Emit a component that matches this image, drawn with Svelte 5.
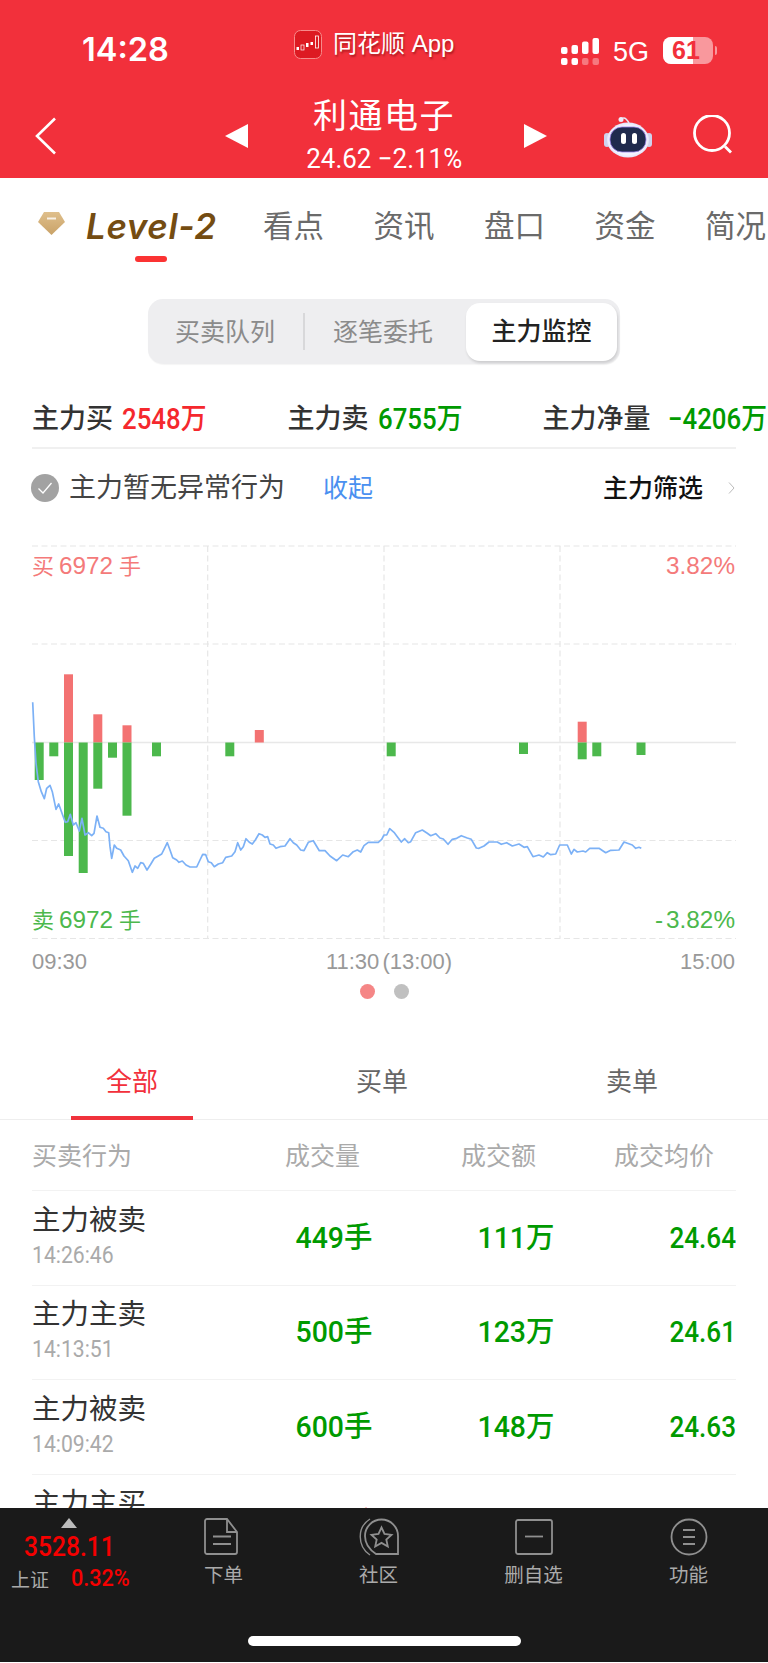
<script>
  const lineA = [[98,517],[103,620],[108,700],[115,755],[124,785],[133,806],[140,775],[150,766],[157,785],[168,838],[176,822],[186,850],[196,877],[203,875],[211,853],[220,885],[228,878],[238,903],[246,865],[255,915],[265,908],[275,917],[282,910],[291,858],[300,892],[310,895],[318,905],[326,908],[330,950],[335,985],[343,945],[350,955],[362,960],[372,978],[385,992],[397,1027],[405,1008],[413,1015],[422,998],[430,1000],[441,1020],[452,1003],[463,985],[475,978],[485,972],[492,958],[502,938],[510,960],[518,983],[530,990],[537,997],[547,993],[558,1005],[570,1011],[590,1011],[600,990],[608,973],[617,974],[625,995],[634,998],[643,1010],[655,1002],[668,998],[677,982],[695,978],[705,965],[713,938],[722,960],[730,950],[738,926],[748,937],[757,942],[766,930],[777,911],[787,915],[795,922],[803,920],[810,942],[820,945],[828,955],[840,950],[855,948],[870,926],[880,938],[890,945],[902,960],[912,962],[925,937],[940,932],[958,962],[975,962],[990,978],[1010,992],[1028,975],[1045,980],[1060,965],[1072,960],[1082,966],[1092,947],[1105,937],[1135,937],[1145,928]];
  const lineB = [[0,915],[8,915],[17,896],[30,907],[40,920],[52,936],[62,926],[73,938],[80,935],[95,908],[115,900],[130,910],[140,917],[155,911],[168,924],[178,927],[192,943],[205,928],[218,925],[232,917],[250,924],[262,928],[277,954],[285,955],[300,948],[315,936],[340,936],[352,943],[368,938],[385,948],[405,942],[420,952],[430,950],[447,980],[465,975],[478,981],[490,968],[500,974],[515,972],[527,945],[540,945],[550,945],[562,972],[570,958],[580,966],[597,963],[605,966],[617,955],[645,955],[665,968],[680,961],[705,960],[720,936],[745,945],[755,955],[765,952],[772,955]];
  const points = [...lineA.map(([x,y]) => [x/3, 530+y/3]), ...lineB.map(([x,y]) => [384+x/3, 530+y/3])]
    .map(([x,y]) => `${x.toFixed(1)},${y.toFixed(1)}`).join(' ');

  const mid = 742.500;
  const bars = [
    [34.7,null,780],[49.3,null,756.3],[64,674.3,856],[78.7,null,873],[93.3,714.3,788.7],[108,null,757.7],
    [122.5,725.3,815.7],[152,null,756.3],[225.3,null,756.3],[254.8,730,null],[386.7,null,756.3],[519,null,754],
    [577.7,721.7,759.3],[592.3,null,756.3],[636.5,null,755]
  ];

  const navTabs = ['看点','资讯','盘口','资金','简况'];
  const rows = [
    {name:'主力被卖',time:'14:26:46',vol:'449手',amt:'111万',avg:'24.64',up:false},
    {name:'主力主卖',time:'14:13:51',vol:'500手',amt:'123万',avg:'24.61',up:false},
    {name:'主力被卖',time:'14:09:42',vol:'600手',amt:'148万',avg:'24.63',up:false},
    {name:'主力主买',time:'14:05:18',vol:'449手',amt:'111万',avg:'24.64',up:true}
  ];
</script>

<div class="page">
  <header class="head">
    <div class="status">
      <span class="clock">14:28</span>
      <svg class="appicon" viewBox="0 0 28 29" width="28" height="29">
        <rect x=".5" y=".5" width="27" height="28" rx="6" fill="#dd1a22" stroke="#f78a8a"/>
        <g fill="#fff"><rect x="2.5" y="17" width="2.5" height="3"/><rect x="7" y="15" width="3" height="5" fill="none" stroke="#fff" stroke-width=".7"/><rect x="12" y="13" width="2.5" height="4"/><rect x="16.500" y="12" width="2.500" height="3"/><rect x="21.500" y="6" width="3" height="12" fill="none" stroke="#fff" stroke-width=".8"/></g>
      </svg>
      <span class="appname">同花顺 App</span>
      <svg class="signal" viewBox="0 0 39 27" width="39" height="27">
        <g fill="#fff">
          <rect x="0" y="9" width="6.500" height="7" rx="2"/><rect x="10.500" y="7" width="6.500" height="9" rx="2"/><rect x="21" y="3.500" width="6.500" height="12.500" rx="2"/><rect x="31.500" y="0" width="6.500" height="16" rx="2"/>
          <rect x="0" y="20" width="6.500" height="7" rx="2"/><rect x="10.500" y="20" width="6.500" height="7" rx="2"/>
          <rect x="21" y="20" width="6.500" height="7" rx="2" opacity=".35"/><rect x="31.500" y="20" width="6.500" height="7" rx="2" opacity=".35"/>
        </g>
      </svg>
      <span class="net">5G</span>
      <span class="battery"><span class="level"></span><b>61</b></span>
      <span class="tip"></span>
    </div>
    <div class="nav">
      <svg class="back" viewBox="0 0 22 38" width="22" height="38"><path d="M20 1.500 2 19l18 17.500" fill="none" stroke="#fff" stroke-width="2.600"/></svg>
      <span class="tri left"></span>
      <div class="title">
        <div class="tname">利通电子</div>
        <div class="tprice"><span>24.62 −2.11%</span></div>
      </div>
      <span class="tri right"></span>
      <svg class="robot" viewBox="0 0 48 42" width="48" height="42">
        <defs>
          <radialGradient id="rh" cx=".5" cy=".5" r=".6"><stop offset=".7" stop-color="#f4f3ff"/><stop offset="1" stop-color="#cfd0f0"/></radialGradient>
        </defs>
        <path d="M17 5c0-3 3-4 5-2s2 2 3 4" fill="none" stroke="#e6e6f5" stroke-width="1.500"/>
        <circle cx="17" cy="3.500" r="2.500" fill="#ecebfa"/>
        <rect x="0" y="17" width="6" height="14" rx="3" fill="#cfd2ee"/><rect x="42" y="17" width="6" height="14" rx="3" fill="#cfd2ee"/>
        <ellipse cx="24" cy="24" rx="21" ry="17.500" fill="url(#rh)"/>
        <rect x="6" y="11" width="36" height="25" rx="12" fill="#1f2a4d" stroke="#9a82e8" stroke-width=".8"/>
        <rect x="17" y="17" width="5" height="11" rx="2.500" fill="#fff"/><rect x="28" y="17" width="5" height="11" rx="2.500" fill="#fff"/>
      </svg>
      <svg class="search" viewBox="0 0 40 40" width="40" height="40"><circle cx="19" cy="18" r="17.500" fill="none" stroke="#fff" stroke-width="2.800"/><path d="M32 31.500l6 6" stroke="#fff" stroke-width="2.800"/></svg>
    </div>
  </header>

  <nav class="tabs">
    <svg class="gem" viewBox="0 0 27 23" width="27" height="23">
      <defs><linearGradient id="gm" x1="0" y1="0" x2="0" y2="1"><stop offset="0" stop-color="#dfbf8b"/><stop offset="1" stop-color="#c9a268"/></linearGradient></defs>
      <path d="M6 0h15l6 10-13.500 13L0 10z" fill="url(#gm)"/><rect x="9" y="5.500" width="9" height="2" fill="#fff" opacity=".8"/>
    </svg>
    <span class="lv">Level-2<i></i></span>
    {#each navTabs as t}<span class="ntab">{t}</span>{/each}
  </nav>

  <div class="seg">
    <span class="s s1">买卖队列</span><i class="sdiv"></i><span class="s s2">逐笔委托</span><span class="s on">主力监控</span>
  </div>

  <div class="sum">
    <div class="sc c1"><span class="k">主力买</span><span class="v up">2548万</span></div>
    <div class="sc c2"><span class="k">主力卖</span><span class="v dn">6755万</span></div>
    <div class="sc c3"><span class="k">主力净量</span><span class="v dn">−4206万</span></div>
  </div>

  <div class="alert">
    <svg class="ok" viewBox="0 0 28 28" width="28" height="28"><circle cx="14" cy="14" r="14" fill="#a2a2a2"/><path d="M7.500 14.500l4.500 4.500 8.500-10" fill="none" stroke="#fff" stroke-width="1.300"/></svg>
    <span class="atext">主力暂无异常行为</span>
    <span class="fold">收起</span>
    <span class="filter">主力筛选</span>
    <svg class="chev" viewBox="0 0 7 12" width="7" height="12"><path d="M1 .5 6 6l-5 5.500" fill="none" stroke="#bbb" stroke-width="1"/></svg>
  </div>

  <svg class="chart" viewBox="0 530 768 445" width="768" height="445">
    <g stroke="#e6e6e6" stroke-width="1.200" stroke-dasharray="6 3.500" fill="none">
      <path d="M32 546H736M32 644H736M32 840.500H736M32 938.500H736"/>
      <path d="M207.700 546V938M384 546V938M560 546V938"/>
    </g>
    <path d="M32 742.500H736" stroke="#e8e8e8" stroke-width="1.500"/>
    {#each bars as [x, top, bottom]}
      {#if top}<rect x={x} y={top} width="9" height={mid - top} fill="#f37272"/>{/if}
      {#if bottom}<rect x={x} y={mid} width="9" height={bottom - mid} fill="#4cb84c"/>{/if}
    {/each}
    <polyline points={points} fill="none" stroke="#7cb1f6" stroke-width="1.700" stroke-linejoin="round"/>
    <g class="ct">
      <text y="574" fill="#f47a7a"><tspan x="32" class="cj">买</tspan><tspan x="59">6972</tspan><tspan x="119" class="cj">手</tspan></text>
      <text x="735" y="574" text-anchor="end" fill="#f47a7a">3.82%</text>
      <text y="928" fill="#4cb84c"><tspan x="32" class="cj">卖</tspan><tspan x="59">6972</tspan><tspan x="119" class="cj">手</tspan></text>
      <text x="735" y="928" text-anchor="end" fill="#4cb84c"><tspan letter-spacing="3">-</tspan>3.82%</text>
    </g>
    <g class="ax" fill="#999">
      <text x="32" y="969">09:30</text>
      <text x="389" y="969" text-anchor="middle" word-spacing="-3">11:30 (13:00)</text>
      <text x="735" y="969" text-anchor="end">15:00</text>
    </g>
  </svg>

  <div class="dots"><i class="d1"></i><i class="d2"></i></div>

  <div class="ltabs">
    <span class="lt on">全部</span><span class="lt">买单</span><span class="lt">卖单</span>
  </div>

  <div class="list">
    <div class="lhead">
      <span class="h0">买卖行为</span><span>成交量</span><span>成交额</span><span>成交均价</span>
    </div>
    {#each rows as r}
      <div class="row">
        <div class="who"><div class="nm">{r.name}</div><div class="tm"><span>{r.time}</span></div></div>
        <div class="val wide" class:red={r.up}><span>{r.vol}</span></div>
        <div class="val wide" class:red={r.up}><span>{r.amt}</span></div>
        <div class="val" class:red={r.up}><span>{r.avg}</span></div>
      </div>
    {/each}
  </div>

  <footer class="bar">
    <div class="idx">
      <i class="itri"></i>
      <div class="inum"><span>3528.11</span></div>
      <div class="isub"><em>上证</em><span>0.32%</span></div>
    </div>
    <div class="bi b1">
      <svg viewBox="0 0 36 38" width="36" height="38"><g fill="none" stroke="#8f8f8f" stroke-width="1.800"><path d="M3 1h20l10 13v20a2 2 0 0 1-2 2H3a2 2 0 0 1-2-2V3a2 2 0 0 1 2-2z"/><path d="M23 1v13h10"/><path d="M9 18.500h18M9 26h18"/></g></svg>
      <span>下单</span>
    </div>
    <div class="bi">
      <svg viewBox="0 0 42 38" width="42" height="38"><g fill="none" stroke="#8f8f8f" stroke-width="1.800"><path d="M40 36V18A16.500 16.500 0 0 0 7 18c0 8 5 14 11 18z"/><path d="M12 1C-1 9-1 28 12 37" stroke-width="1.400"/><path d="M23.500 9.500l3 6.500 7 .8-5.200 4.700 1.500 7-6.300-3.600-6.300 3.600 1.500-7-5.200-4.700 7-.8z"/></g></svg>
      <span>社区</span>
    </div>
    <div class="bi">
      <svg viewBox="0 0 38 38" width="38" height="38"><g fill="none" stroke="#8f8f8f" stroke-width="1.800"><rect x="1" y="2" width="36" height="34" rx="2"/><path d="M10 18.500h18"/></g></svg>
      <span>删自选</span>
    </div>
    <div class="bi">
      <svg viewBox="0 0 38 38" width="38" height="38"><g fill="none" stroke="#8f8f8f" stroke-width="1.800"><circle cx="19" cy="19" r="17.500"/><path d="M13 12h12M13 19h12M13 26h12"/></g></svg>
      <span>功能</span>
    </div>
    <i class="home"></i>
  </footer>
</div>

<style>
  :global(body) { background: #fff; }
  .page {
    width: 768px; height: 1662px; display: flex; flex-direction: column; overflow: hidden; background: #fff;
    font-family: "Liberation Sans", "Noto Sans CJK SC", sans-serif; color: #333;
  }
  .head { background: #f2303b; height: 178px; flex: none; color: #fff; }
  .status { height: 100px; display: flex; align-items: center; position: relative; }
  .clock { font: 600 32.500px/1 Inter, sans-serif; margin: 0 0 0 82px; width: 212px; white-space: nowrap; }
  .appicon { margin: -12px 0 0 0; }
  .appname { font-size: 24px; line-height: 30px; margin: -12px 0 0 11px; width: 228px; text-shadow: 1px 2px 2px rgba(90,0,0,.45); white-space: nowrap; }
  .signal { position: relative; top: 1px; }
  .net { font-size: 27px; line-height: 30px; margin: 3px 0 0 13px; width: 50px; }
  .battery { position: relative; width: 50px; height: 27px; border-radius: 8px; background: rgba(255,255,255,.5); overflow: hidden; text-align: center; }
  .level { position: absolute; left: 0; top: 0; bottom: 0; width: 30px; background: #fff; }
  .battery b { position: relative; display: block; font-size: 25px; line-height: 27px; color: #f2303b; margin-right: 4px; }
  .tip { width: 2px; height: 9px; margin-left: 2px; border-radius: 0 2px 2px 0; background: rgba(255,255,255,.5); }

  .nav { height: 78px; display: flex; align-items: center; }
  .back { margin: -6px 0 0 35px; }
  .tri { width: 0; height: 0; border-top: 12.500px solid transparent; border-bottom: 12.500px solid transparent; margin-top: -6px; }
  .tri.left { border-right: 23px solid #fff; margin-left: 168px; }
  .tri.right { border-left: 23px solid #fff; margin-left: 4px; }
  .title { width: 272px; text-align: center; margin-top: -6px; }
  .tname { font-size: 34px; line-height: 40px; letter-spacing: 1.500px; margin-top: -2px; }
  .tprice { font: 27px/32px Roboto, sans-serif; margin-top: 7px; }
  .tprice span { display: inline-block; transform: scaleX(.96); white-space: nowrap; }
  .robot { margin: -5px 0 0 57px; }
  .search { margin: -9px 0 0 41px; }

  .tabs { height: 92px; flex: none; display: flex; align-items: center; font-size: 30.500px; white-space: nowrap; padding-top: 4px; box-sizing: border-box; }
  .gem { margin: -5px 0 0 38px; }
  .lv { position: relative; font: italic 600 35px/40px Inter, sans-serif; color: #744c12; margin-left: 21px; width: 129px; letter-spacing: .6px; white-space: nowrap; }
  .lv i { position: absolute; left: 49px; top: 50px; width: 32px; height: 6px; border-radius: 3px; background: #fb3333; }
  .ntab { margin-left: 49.500px; line-height: 40px; color: #6a6a6a; }
  .lv + .ntab { margin-left: 48px; }

  .seg { flex: none; margin: 29px 0 0 148px; width: 472px; height: 65px; box-sizing: border-box; border-radius: 15px; background: #eeeef0; display: flex; align-items: center; font-size: 25px; color: #8b8b8b; box-shadow: 0 1px 1px rgba(0,0,0,.04); }
  .s { line-height: 32px; white-space: nowrap; }
  .s1 { margin-left: 27px; width: 130px; }
  .sdiv { width: 2px; height: 37px; background: #d8d8da; margin-left: -2px; }
  .s2 { margin-left: 28px; width: 134px; }
  .s.on { width: 151px; height: 58px; line-height: 56px; font-weight: 500; background: #fff; border-radius: 14px; color: #222; text-align: center; box-shadow: 1px 2px 3px rgba(0,0,0,.15); margin-left: -1px; }

  .sum { flex: none; margin: 26px 32px 0; height: 57px; border-bottom: 2px solid #f0f0f0; display: grid; grid-template-columns: 255.500px 255px 193.500px; align-items: center; white-space: nowrap; }
  .sc { display: flex; align-items: center; }
  .k { font-size: 27px; font-weight: 500; line-height: 36px; color: #333; }
  .v { font: 500 29px/36px Roboto, "Noto Sans CJK SC", sans-serif; transform: scaleX(.89); transform-origin: left center; margin-left: 9px; }
  .c3 .v { margin-left: 17px; }
  .up { color: #f5282d; }
  .dn { color: #009a00; }

  .alert { flex: none; height: 78px; display: flex; align-items: center; white-space: nowrap; }
  .ok { margin-left: 31px; }
  .atext { font-size: 27px; line-height: 36px; margin-left: 10px; width: 216px; color: #444; }
  .fold { font-size: 25px; line-height: 36px; color: #4a90f0; margin-left: 38px; width: 280px; }
  .filter { font-size: 25px; font-weight: 500; line-height: 36px; color: #111; width: 125px; }
  .chart { display: block; flex: none; margin-top: 3px; }
  .ct text { font: 24.300px "Liberation Sans", "Noto Sans CJK SC", sans-serif; }
  .ct .cj { font-size: 22px; }
  .ax text { font: 22px "Liberation Sans", sans-serif; }

  .dots { flex: none; height: 32px; display: flex; align-items: center; padding-left: 359.500px; gap: 19px; }
  .dots i { width: 15px; height: 15px; border-radius: 50%; }
  .d1 { background: #f58686; }
  .d2 { background: #c0c0c0; }

  .ltabs { flex: none; margin-top: 37px; height: 76px; padding-left: 7px; display: grid; grid-template-columns: repeat(3, 250px); border-bottom: 1px solid #eee; box-sizing: border-box; font-size: 26px; color: #666; }
  .lt { line-height: 77px; text-align: center; }
  .lt.on { justify-self: center; width: 122px; height: 76px; box-sizing: border-box; color: #f2303b; border-bottom: 4px solid #f0323c; }

  .list { flex: 1; min-height: 0; overflow: hidden; }
  .lhead { height: 71px; box-sizing: border-box; margin: 0 32px; border-bottom: 1.500px solid #f2f2f2; display: grid; grid-template-columns: 200px 128px 176px 178px; align-items: center; font-size: 25px; color: #aaa; white-space: nowrap; }
  .lhead span { text-align: right; line-height: 36px; padding-top: 2px; }
  .lhead .h0 { text-align: left; }
  .row { height: 94.500px; box-sizing: border-box; margin: 0 32px; border-bottom: 1.500px solid #f2f2f2; display: grid; grid-template-columns: 200px 140px 182px 182px; align-items: center; }
  .nm { font-size: 28.500px; line-height: 36px; color: #333; white-space: nowrap; }
  .tm { font: 23px/36px Roboto, sans-serif; color: #aaa; }
  .tm span { display: inline-block; transform: scaleX(.92); transform-origin: left center; }
  .val { text-align: right; font: 500 29px/36px Roboto, "Noto Sans CJK SC", sans-serif; color: #009a00; white-space: nowrap; }
  .val span { display: inline-block; transform: scaleX(.9); transform-origin: right center; }
  .val.wide span { transform: scaleX(.98); }
  .val.red { color: #f5282d; padding-top: 4px; }

  .bar { position: relative; flex: none; height: 154px; background: #1a1a1a; display: grid; grid-template-columns: 146px repeat(4, 155px); align-items: start; }
  .idx { display: flex; flex-direction: column; }
  .itri { margin: 10px 0 0 61px; width: 0; height: 0; border-left: 8.500px solid transparent; border-right: 8.500px solid transparent; border-bottom: 10px solid #bbb; }
  .inum { font: 500 28px/34px Roboto, sans-serif; color: #f50000; margin: 2px 0 0 24px; }
  .inum span { display: inline-block; transform: scaleX(.88); transform-origin: left center; }
  .isub { display: flex; align-items: center; height: 28px; white-space: nowrap; }
  .isub em { font-style: normal; font-size: 19px; color: #aaa; margin-left: 11px; width: 60px; }
  .isub span { font: 500 24px/28px Roboto, sans-serif; color: #f50000; display: inline-block; transform: scaleX(.9); transform-origin: left center; }
  .bi { display: flex; flex-direction: column; align-items: center; padding-top: 10px; }
  .bi svg { display: block; height: 38px; }
  .b1 svg { margin-left: -4px; }
  .bi span { font-size: 19.500px; line-height: 24px; margin-top: 7px; color: #aaa; white-space: nowrap; }
  .home { position: absolute; left: 248px; top: 128px; width: 273px; height: 10px; border-radius: 5px; background: #fff; }
</style>
